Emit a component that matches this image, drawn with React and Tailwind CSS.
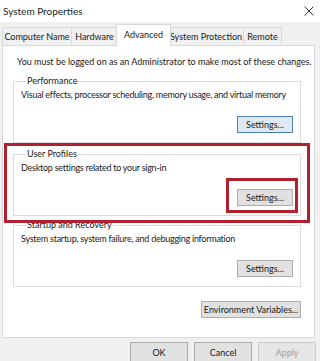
import React from "react";

const font = { fontFamily: "Lato, 'Liberation Sans', sans-serif" };

function Btn({ children, className = "" }) {
  return (
    <div
      className={
        "flex items-center justify-center border text-[9px] leading-none " +
        className
      }
    >
      {children}
    </div>
  );
}

function Group({ title, desc, focused, gap }) {
  return (
    <fieldset
      className={
        "mx-[10px] mr-[13px] border border-[#dcdcdc] px-[7px] pb-[8px] h-[68px] " +
        gap
      }
    >
      <legend className="ml-[5px] px-[1px] text-[9px] leading-[12px] text-[#1a1a1a]">
        {title}
      </legend>
      <div className="mt-[2px] text-[9px] leading-[12px] tracking-[-0.25px] text-[#1a1a1a] whitespace-nowrap">
        {desc}
      </div>
      <div className="mt-[15px] flex justify-end">
        <Btn
          className={
            "w-[56px] h-[17px] " +
            (focused
              ? "border-[#4a7fae] bg-[#dfe9f3] text-[#1a1a1a]"
              : "border-[#adadad] bg-[#e1e1e1] text-[#1a1a1a]")
          }
        >
          Settings...
        </Btn>
      </div>
    </fieldset>
  );
}

export default function App() {
  const tabs = [
    { name: "Computer Name", w: "w-[70px]" },
    { name: "Hardware", w: "w-[47px]" },
    { name: "Advanced", w: "w-[55px]", sel: true },
    { name: "System Protection", w: "w-[76px]" },
    { name: "Remote", w: "w-[39px]" },
  ];
  return (
    <div
      className="relative w-[320px] h-[361px] overflow-hidden bg-[#f0f0f0]"
      style={font}
    >
      {/* Title bar */}
      <div className="h-[22px] bg-white flex items-center justify-between pl-[3px] pr-[6px]">
        <span className="text-[10px] text-[#1a1a1a] leading-none">
          System Properties
        </span>
        <svg width="10" height="10" viewBox="0 0 10 10">
          <path d="M0.5 0.5 L9.5 9.5 M9.5 0.5 L0.5 9.5" stroke="#333" strokeWidth="1" />
        </svg>
      </div>

      {/* Tabs */}
      <div className="flex items-end h-[23px] pl-[2px]">
        {tabs.map((t) =>
          t.sel ? (
            <div
              key={t.name}
              className={
                "relative z-10 -mb-[1px] -mx-[2px] h-[22px] bg-white border border-b-0 border-[#d9d9d9] flex items-center justify-center text-[9px] text-[#1a1a1a] pb-[2px] " +
                t.w
              }
            >
              {t.name}
            </div>
          ) : (
            <div
              key={t.name}
              className={
                "h-[18px] -ml-px first:ml-0 bg-[#f0f0f0] border border-b-0 border-[#d9d9d9] flex items-center justify-center text-[9px] text-[#1a1a1a] " +
                t.w
              }
            >
              {t.name}
            </div>
          )
        )}
      </div>

      {/* Panel */}
      <div className="mx-[2px] mr-[5px] h-[293px] bg-white border border-[#d9d9d9] flex flex-col">
        <div className="pt-[10px] pl-[14px] text-[9px] leading-[12px] text-[#1a1a1a] whitespace-nowrap">
          You must be logged on as an Administrator to make most of these changes.
        </div>
        <div className="mt-[7px] flex flex-col">
          <Group
            title="Performance"
            desc="Visual effects, processor scheduling, memory usage, and virtual memory"
            focused
            gap="mt-0"
          />
          <Group
            title="User Profiles"
            desc="Desktop settings related to your sign-in"
            gap="mt-[5px]"
          />
          <Group
            title="Startup and Recovery"
            desc="System startup, system failure, and debugging information"
            gap="mt-[3px]"
          />
        </div>
        <div className="mt-[14px] flex justify-end mr-[13px]">
          <Btn className="w-[100px] h-[17px] border-[#adadad] bg-[#e1e1e1] text-[#1a1a1a]">
            Environment Variables...
          </Btn>
        </div>
      </div>

      {/* Bottom buttons */}
      <div className="mt-[4px] flex justify-end gap-[6px] pr-[4px]">
        <Btn className="w-[58px] h-[21px] border-[#adadad] bg-[#e1e1e1] text-[#1a1a1a]">
          OK
        </Btn>
        <Btn className="w-[58px] h-[21px] border-[#adadad] bg-[#e1e1e1] text-[#1a1a1a]">
          Cancel
        </Btn>
        <Btn className="w-[58px] h-[21px] border-[#cccccc] bg-[#e6e6e6] text-[#a0a0a0]">
          Apply
        </Btn>
      </div>

      {/* Red annotation rectangles */}
      <div className="absolute left-[4px] top-[143px] w-[306px] h-[80px] border-[3px] border-[#b0202e]" />
      <div className="absolute left-[226px] top-[178px] w-[72px] h-[35px] border-[3px] border-[#b0202e]" />
    </div>
  );
}
